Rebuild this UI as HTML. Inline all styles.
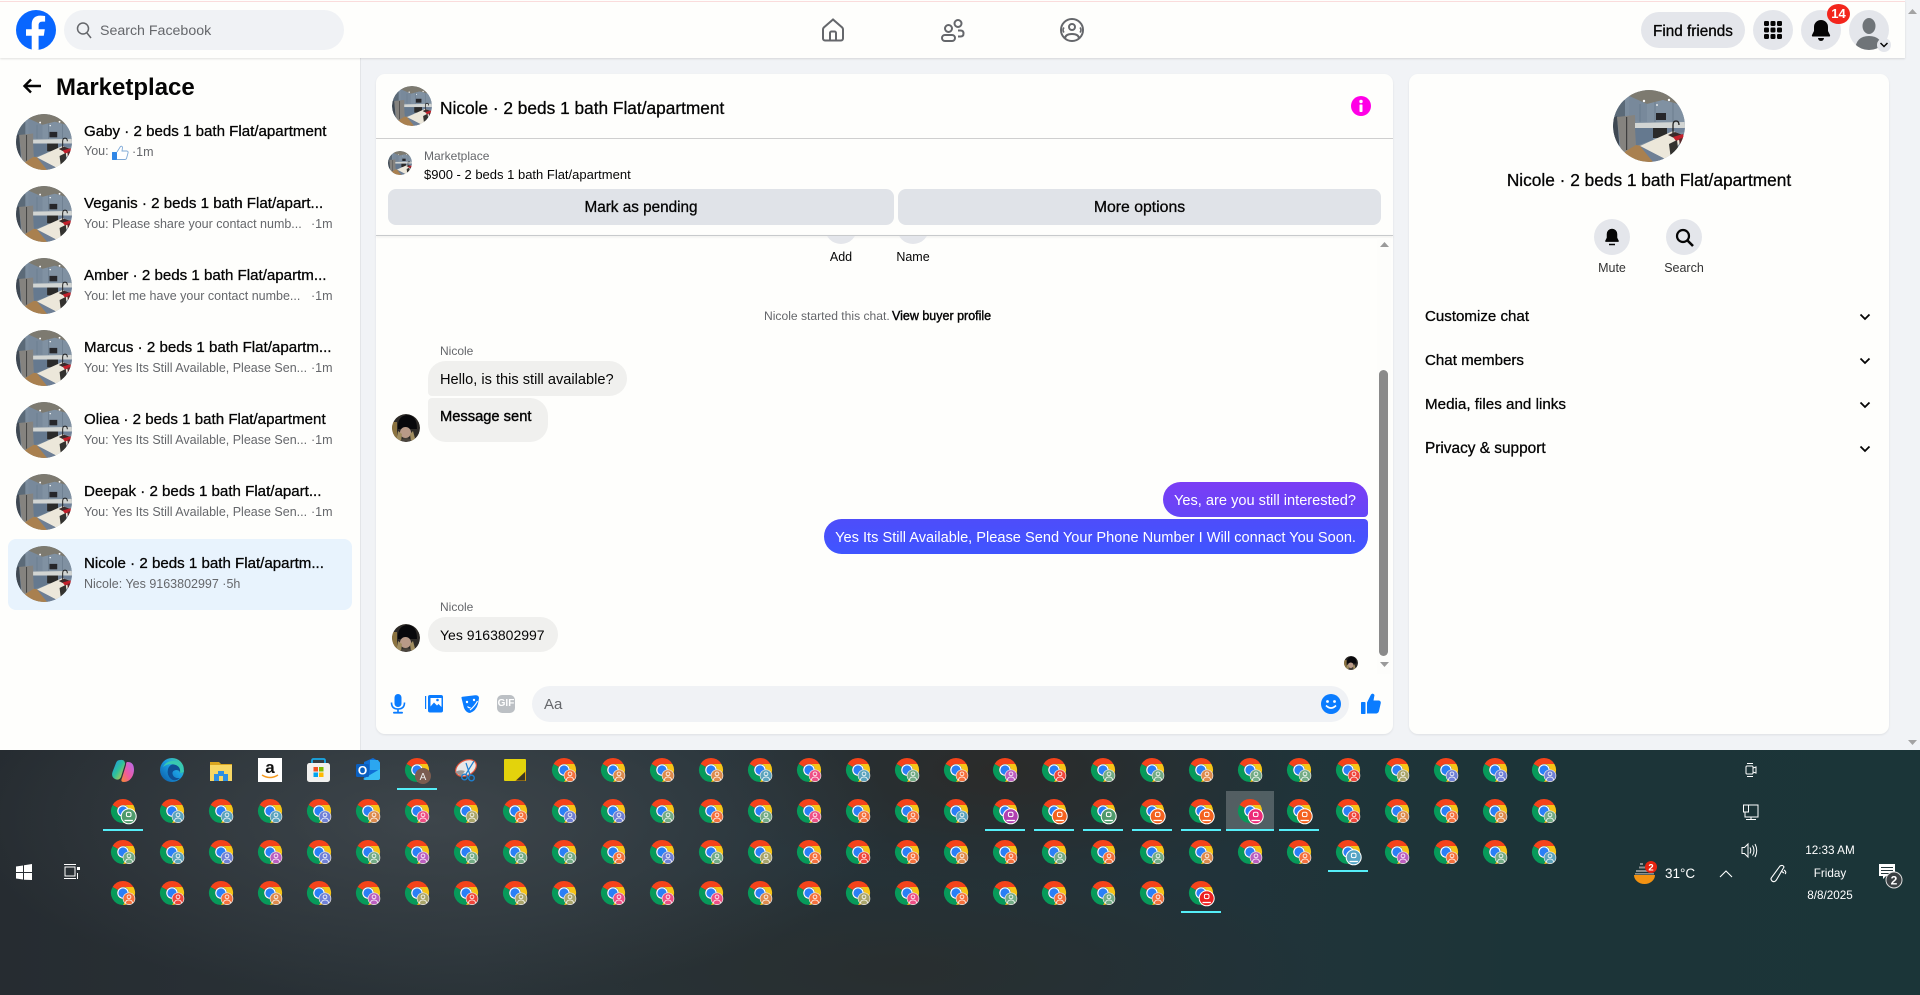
<!DOCTYPE html>
<html lang="en"><head><meta charset="utf-8"><title>Marketplace</title>
<style>
html,body{margin:0;padding:0;width:1920px;height:995px;overflow:hidden;background:#f1f3f6;font-family:"Liberation Sans",sans-serif;color:#050505}
.abs,.t,.a,.i{position:absolute}
.t{white-space:nowrap;line-height:20px;height:20px}
.s{-webkit-text-stroke:.3px currentColor}
.g{color:#65676b}
.a{border-radius:50%;display:block}
.i{display:block;overflow:visible}
.ti{font-size:15.1px;left:84px}
.su{font-size:12.5px;left:84px;color:#65676b}
.c{text-align:center}
.btn{position:absolute;background:#e0e3e8;border-radius:8px;top:189px;height:36px;line-height:38px;text-align:center;white-space:nowrap}
.rb{position:absolute;background:#e4e6eb;border-radius:50%}
.ch{position:absolute;left:1859px;width:12px;height:12px}
</style></head><body>
<svg width="0" height="0" style="position:absolute"><defs>
<clipPath id="kc"><circle cx="36" cy="36" r="36"/></clipPath>
<symbol id="k" viewBox="0 0 72 72"><g clip-path="url(#kc)">
<rect width="72" height="72" fill="#7c8d9e"/>
<polygon points="0,0 72,0 72,16 50,10 34,14 16,6 0,14" fill="#7d7a70"/>
<polygon points="16,6 34,14 34,32 20,30 16,26" fill="#78899b"/>
<polygon points="34,14 50,10 72,16 72,34 34,32" fill="#8091a2"/>
<path d="M27 14v18M42 12v20M60 13v20" stroke="#66788a" stroke-width=".8"/>
<rect x="43" y="23" width="10" height="7" fill="#26262a"/>
<polygon points="0,14 12,10 12,28 0,30" fill="#5b6a78"/>
<polygon points="0,28 4,26 7,64 0,60" fill="#3f4852"/>
<polygon points="4,27 22,25 23,58 8,62" fill="#85837f"/>
<rect x="13" y="27" width="1.2" height="33" fill="#3e3e3e"/>
<polygon points="22,33 72,32 72,38 22,38" fill="#d2d5d3"/>
<polygon points="22,38 40,38 40,50 23,56" fill="#65798f"/>
<rect x="40" y="38" width="14" height="10" fill="#2a2a2a"/>
<polygon points="54,38 72,38 72,42 54,44" fill="#6f8198"/>
<polygon points="8,64 23,55 29,56 42,72 14,72" fill="#a9804f"/>
<polygon points="27,56 60,41 72,46 54,70" fill="#ece7da"/>
<polygon points="27,56 54,70 50,72 40,72" fill="#6e7f95"/>
<path d="M60 44V35q0-4 3-4t3 4" fill="none" stroke="#222" stroke-width="1.300"/>
<polygon points="55,45 62,42 70,45 63,49" fill="#3a2a2a"/>
<polygon points="60,47 70,44 71,48 63,51" fill="#c2202b"/>
<polygon points="56,54 64,50 66,66 58,70" fill="#33322f"/>
<polygon points="66,49 72,47 72,60 68,64" fill="#5b2a2c"/>
<g fill="#fff"><circle cx="31" cy="11" r="1.200"/><circle cx="56" cy="10" r="1.200"/><circle cx="44" cy="15" r=".9"/></g>
</g></symbol>
<clipPath id="nc"><circle cx="14" cy="14" r="14"/></clipPath>
<symbol id="n" viewBox="0 0 28 28"><g clip-path="url(#nc)">
<rect width="28" height="28" fill="#2d2a27"/>
<rect x="0" y="8" width="5" height="20" fill="#8a7240"/>
<path d="M6 15Q5 2 15 1q10 0 10 14z" fill="#08080b"/>
<ellipse cx="13.500" cy="18.500" rx="5.500" ry="5.500" fill="#b99a88"/>
<path d="M6 17l-2 11h5l1-8zM21 17l3 11h-5l-1-8z" fill="#a08d60"/>
<path d="M8 28q1-4 6-4t6 4z" fill="#4a443c"/>
</g></symbol>
<linearGradient id="cp1" x1="0" y1="0" x2="1" y2="1"><stop offset="0" stop-color="#1e8ff0"/><stop offset=".5" stop-color="#2fc39a"/><stop offset="1" stop-color="#f4c430"/></linearGradient>
<linearGradient id="cp2" x1="1" y1="0" x2="0" y2="1"><stop offset="0" stop-color="#b06cf0"/><stop offset=".55" stop-color="#f05aa0"/><stop offset="1" stop-color="#f58a2e"/></linearGradient>
<linearGradient id="ed" x1="0" y1="1" x2="1" y2="0"><stop offset="0" stop-color="#0c59a4"/><stop offset=".55" stop-color="#1b9de2"/><stop offset="1" stop-color="#4fdc93"/></linearGradient>
<g id="c">
<path d="M12 0A12 12 0 0 1 22.400 6H12A6 6 0 0 0 6.800 9L1.600 6A12 12 0 0 1 12 0Z" fill="#f5431a"/>
<path d="M22.400 6A12 12 0 0 1 12 24L17.200 15A6 6 0 0 0 12 6Z" fill="#f7c417"/>
<path d="M1.600 6A12 12 0 0 0 12 24L17.200 15A6 6 0 0 1 6.800 9Z" fill="#079a5a"/>
<circle cx="12" cy="12" r="5.800" fill="#fff"/><circle cx="12" cy="12" r="4.600" fill="#2a7ff6"/>
</g>
<g id="b"><circle cx="18" cy="17.700" r="5.900" stroke="#efe9e4" stroke-width=".7"/><circle cx="18" cy="15.900" r="1.900" fill="none" stroke="#fff" stroke-width=".8"/><path d="M14.500 22q.2-3 3.500-3t3.500 3" fill="none" stroke="#fff" stroke-width=".8"/></g>
<g id="B"><circle cx="17.700" cy="17.300" r="7.500" stroke="#fff" stroke-width="1"/><rect x="15.400" y="13.300" width="4.600" height="4.300" rx="1.500" fill="none" stroke="#fff" stroke-width="1"/><path d="M13.500 21.500h8.400" stroke="#fff" stroke-width="1.300"/></g>
<g id="R"><use href="#c"/><use href="#b" fill="#f0453a"/></g>
<g id="O"><use href="#c"/><use href="#b" fill="#f4703c"/></g>
<g id="A"><use href="#c"/><use href="#b" fill="#dd8a4c"/></g>
<g id="G"><use href="#c"/><use href="#b" fill="#72ab85"/></g>
<g id="T"><use href="#c"/><use href="#b" fill="#5ba3bd"/></g>
<g id="U"><use href="#c"/><use href="#b" fill="#6f80d6"/></g>
<g id="P"><use href="#c"/><use href="#b" fill="#bb5fc0"/></g>
<g id="K"><use href="#c"/><use href="#b" fill="#ee4f85"/></g>
<g id="L"><use href="#c"/><use href="#b" fill="#a9a56b"/></g>
<g id="xG"><use href="#c"/><use href="#B" fill="#4f9a6c"/></g>
<g id="xP"><use href="#c"/><use href="#B" fill="#b040b0"/></g>
<g id="xO"><use href="#c"/><use href="#B" fill="#f4621f"/></g>
<g id="xK"><use href="#c"/><use href="#B" fill="#ec2a78"/></g>
<g id="xT"><use href="#c"/><use href="#B" fill="#55a5c5"/></g>
<g id="xR"><use href="#c"/><use href="#B" fill="#ee2020"/></g>
</defs></svg>

<!-- header -->
<div class="abs" style="left:0;top:0;width:1905px;height:58px;background:#fefefc;box-shadow:0 1px 2px rgba(0,0,0,.12);z-index:3">
<div class="abs" style="left:0;top:1px;width:100%;height:1px;background:#fadcdc"></div>
<svg class="i" style="left:16px;top:10px" width="40" height="40" viewBox="0 0 40 40"><circle cx="20" cy="20" r="20" fill="#0866ff"/><path d="M27.800 25.800l1-6.500h-6.200v-4.200c0-1.800.9-3.500 3.700-3.500h2.800V6s-2.600-.4-5-.4c-5.100 0-8.400 3.100-8.400 8.700v5H10v6.500h5.700v14c1.400.2 2.300.3 3.400.3s2.300-.1 3.500-.3v-14z" fill="#fff"/></svg>
<div class="abs" style="left:64px;top:10px;width:280px;height:40px;border-radius:20px;background:#f0f2f5"></div>
<svg class="i" style="left:76px;top:21px" width="16" height="18" viewBox="0 0 16 18"><circle cx="7" cy="7.500" r="5.500" fill="none" stroke="#65676b" stroke-width="1.500"/><path d="M11 12l4 5" stroke="#65676b" stroke-width="1.500"/></svg>
<div class="t g" style="left:100px;top:21px;font-size:14.200px">Search Facebook</div>
<svg class="i" style="left:821px;top:18px" width="24" height="24" viewBox="0 0 24 24" fill="none" stroke="#65676b" stroke-width="2"><path d="M12 1.500L2.800 9.500Q2 10.300 2 11.500V20.500A2 2 0 0 0 4 22.500H20A2 2 0 0 0 22 20.500V11.500Q22 10.300 21.200 9.500Z"/><path d="M9 22V15A1.500 1.500 0 0 1 10.500 13.500H13.500A1.500 1.500 0 0 1 15 15V22"/></svg>
<svg class="i" style="left:941px;top:18px" width="24" height="24" viewBox="0 0 24 24" fill="none" stroke="#65676b" stroke-width="2"><circle cx="7.500" cy="10.500" r="3.500"/><circle cx="17" cy="5.500" r="3.500"/><rect x="1" y="17" width="13" height="6" rx="3"/><path d="M17 12.500h2.500q3 0 3 3t-3 3H17"/></svg>
<svg class="i" style="left:1060px;top:18px" width="24" height="24" viewBox="0 0 24 24" fill="none" stroke="#65676b" stroke-width="2"><circle cx="12" cy="12" r="11"/><circle cx="12" cy="9" r="3"/><path d="M5 21q0-5 7-5t7 5"/><path d="M4 9.500q-2 2.500 0 5M20 9.500q2 2.500 0 5" stroke-width="1.600"/></svg>

<div class="abs c s" style="left:1641px;top:12px;width:104px;height:36px;line-height:39px;border-radius:18px;background:#e4e6eb;font-size:15.300px">Find friends</div>
<div class="rb" style="left:1753px;top:10px;width:40px;height:40px"></div>
<svg class="i" style="left:1764px;top:21px" width="18" height="18" viewBox="0 0 18 18" fill="#050505"><rect x="0" y="0" width="5" height="5" rx="1.200"/><rect x="6.500" y="0" width="5" height="5" rx="1.200"/><rect x="13" y="0" width="5" height="5" rx="1.200"/><rect x="0" y="6.500" width="5" height="5" rx="1.200"/><rect x="6.500" y="6.500" width="5" height="5" rx="1.200"/><rect x="13" y="6.500" width="5" height="5" rx="1.200"/><rect x="0" y="13" width="5" height="5" rx="1.200"/><rect x="6.500" y="13" width="5" height="5" rx="1.200"/><rect x="13" y="13" width="5" height="5" rx="1.200"/></svg>
<div class="rb" style="left:1801px;top:10px;width:40px;height:40px"></div>
<svg class="i" style="left:1809px;top:18px" width="24" height="24" viewBox="0 0 24 24" fill="#050505"><path d="M12 2a7 7 0 0 0-7 7v4l-2 4a1 1 0 0 0 1 1.500h16a1 1 0 0 0 1-1.500l-2-4V9a7 7 0 0 0-7-7z"/><path d="M9 20a3 3 0 0 0 6 0z"/></svg>
<div class="abs c" style="left:1827px;top:4px;width:23px;height:20px;line-height:20px;border-radius:50%;background:#f3251c;color:#fff;font-size:13px;font-weight:bold">14</div>
<div class="rb" style="left:1849px;top:10px;width:40px;height:40px;background:#e4e6eb;overflow:hidden"><svg width="40" height="40" viewBox="0 0 40 40" fill="#6f7478" style="display:block"><ellipse cx="20" cy="16" rx="6.500" ry="8"/><path d="M6 40q1-14 14-14t14 14z"/></svg></div>
<div class="abs" style="left:1877px;top:38px;width:14px;height:14px;border-radius:50%;background:#e4e6eb"></div>
<svg class="i" style="left:1879px;top:41px" width="10" height="8" viewBox="0 0 10 8"><path d="M1.500 2L5 5.500 8.500 2" fill="none" stroke="#050505" stroke-width="1.500"/></svg>
</div>

<!-- page scrollbar -->
<div class="abs" style="left:1905px;top:0;width:15px;height:750px;background:#f1f3f6"></div>
<svg class="i" style="left:1908px;top:9px" width="9" height="5"><polygon points="4.500,0 9,5 0,5" fill="#a3a3a3"/></svg>
<svg class="i" style="left:1908px;top:740px" width="9" height="5"><polygon points="0,0 9,0 4.500,5" fill="#a3a3a3"/></svg>

<!-- left panel -->
<div class="abs" style="left:0;top:58px;width:360px;height:692px;background:#fefefc;border-right:1px solid #e3e5e8"></div>
<svg class="i" style="left:22px;top:78px" width="20" height="16" viewBox="0 0 20 16"><path d="M19 8H3M9 1.500L2.500 8 9 14.500" fill="none" stroke="#050505" stroke-width="2.400"/></svg>
<div class="t" style="left:56px;top:78px;font-size:24px;font-weight:bold">Marketplace</div>

<div class="abs" style="left:8px;top:539px;width:344px;height:71px;border-radius:8px;background:#e8f3fd"></div>

<svg class="a" style="left:16px;top:114px" width="56" height="56"><use href="#k"/></svg>
<div class="t ti s" style="top:122px">Gaby · 2 beds 1 bath Flat/apartment</div>
<div class="t su" style="top:141px">You:</div>
<svg class="i" style="left:112px;top:145px" width="17" height="15" viewBox="0 0 17 15"><rect x="0" y="7" width="5" height="8" rx=".5" fill="#2f86e6"/><path d="M5 7L8.500 1.500Q10 .5 10.500 2.500L10 6H15Q16.500 6.500 16 8L14.500 13.500Q14 14.500 13 14.500H5" fill="#fff" stroke="#7fa9d6" stroke-width=".9"/></svg>
<div class="t su" style="left:132px;top:142px">·1m</div>

<svg class="a" style="left:16px;top:186px" width="56" height="56"><use href="#k"/></svg>
<div class="t ti s" style="top:194px">Veganis · 2 beds 1 bath Flat/apart...</div>
<div class="t su" style="top:214px">You: Please share your contact numb...</div><div class="t su" style="left:311px;top:214px">·1m</div>

<svg class="a" style="left:16px;top:258px" width="56" height="56"><use href="#k"/></svg>
<div class="t ti s" style="top:266px">Amber · 2 beds 1 bath Flat/apartm...</div>
<div class="t su" style="top:286px">You: let me have your contact numbe...</div><div class="t su" style="left:311px;top:286px">·1m</div>

<svg class="a" style="left:16px;top:330px" width="56" height="56"><use href="#k"/></svg>
<div class="t ti s" style="top:338px">Marcus · 2 beds 1 bath Flat/apartm...</div>
<div class="t su" style="top:358px">You: Yes Its Still Available, Please Sen...</div><div class="t su" style="left:311px;top:358px">·1m</div>

<svg class="a" style="left:16px;top:402px" width="56" height="56"><use href="#k"/></svg>
<div class="t ti s" style="top:410px">Oliea · 2 beds 1 bath Flat/apartment</div>
<div class="t su" style="top:430px">You: Yes Its Still Available, Please Sen...</div><div class="t su" style="left:311px;top:430px">·1m</div>

<svg class="a" style="left:16px;top:474px" width="56" height="56"><use href="#k"/></svg>
<div class="t ti s" style="top:482px">Deepak · 2 beds 1 bath Flat/apart...</div>
<div class="t su" style="top:502px">You: Yes Its Still Available, Please Sen...</div><div class="t su" style="left:311px;top:502px">·1m</div>

<svg class="a" style="left:16px;top:546px" width="56" height="56"><use href="#k"/></svg>
<div class="t ti s" style="top:554px">Nicole · 2 beds 1 bath Flat/apartm...</div>
<div class="t su" style="top:574px">Nicole: Yes 9163802997 ·5h</div>

<!-- chat card -->
<div class="abs" style="left:376px;top:74px;width:1017px;height:660px;border-radius:9px;background:#fefefc;box-shadow:0 1px 2px rgba(0,0,0,.08)"></div>
<svg class="a" style="left:392px;top:86px" width="40" height="40"><use href="#k"/></svg>
<div class="t s" style="left:440px;top:98px;font-size:17.300px">Nicole · 2 beds 1 bath Flat/apartment</div>
<svg class="i" style="left:1351px;top:96px" width="20" height="20" viewBox="0 0 20 20"><circle cx="10" cy="10" r="10" fill="#ff00e6"/><circle cx="10" cy="5.500" r="1.700" fill="#fff"/><rect x="8.500" y="8.500" width="3" height="7.500" rx=".7" fill="#fff"/></svg>
<div class="abs" style="left:376px;top:138px;width:1017px;height:1px;background:#cfcfcf"></div>
<svg class="a" style="left:388px;top:151px" width="24" height="24"><use href="#k"/></svg>
<div class="t g" style="left:424px;top:146px;font-size:12px">Marketplace</div>
<div class="t" style="left:424px;top:165px;font-size:13px">$900 - 2 beds 1 bath Flat/apartment</div>
<div class="btn s" style="left:388px;width:506px;font-size:15.300px">Mark as pending</div>
<div class="btn s" style="left:898px;width:483px;font-size:15.800px">More options</div>
<div class="abs" style="left:376px;top:235px;width:1017px;height:1px;background:#c8cacc;box-shadow:0 1px 2px rgba(0,0,0,.12)"></div>

<div class="abs" style="left:825px;top:236px;width:32px;height:8px;overflow:hidden"><div class="abs" style="left:0;top:-24px;width:32px;height:32px;border-radius:50%;background:#e4e6eb"></div></div>
<div class="abs" style="left:897px;top:236px;width:32px;height:8px;overflow:hidden"><div class="abs" style="left:0;top:-24px;width:32px;height:32px;border-radius:50%;background:#e4e6eb"></div></div>
<div class="t c" style="left:811px;top:247px;width:60px;font-size:12.500px">Add</div>
<div class="t c" style="left:883px;top:247px;width:60px;font-size:12.500px">Name</div>
<div class="t g" style="left:764px;top:306px;font-size:12.100px">Nicole started this chat.</div>
<div class="t s" style="left:892px;top:306px;font-size:12.500px;-webkit-text-stroke:.4px #050505">View buyer profile</div>

<div class="abs" style="left:1377px;top:238px;width:14px;height:436px;background:#fdfdfb"></div>
<svg class="i" style="left:1380px;top:242px" width="9" height="5"><polygon points="4.500,0 9,5 0,5" fill="#9a9a9a"/></svg>
<div class="abs" style="left:1379px;top:370px;width:9px;height:286px;border-radius:5px;background:#8a8a8a"></div>
<svg class="i" style="left:1380px;top:662px" width="9" height="5"><polygon points="0,0 9,0 4.500,5" fill="#9a9a9a"/></svg>

<div class="t g" style="left:440px;top:341px;font-size:12px">Nicole</div>
<div class="abs" style="left:428px;top:361px;width:199px;height:35px;background:#f0f0ee;border-radius:18px 18px 18px 4px"></div>
<div class="t" style="left:440px;top:370px;font-size:14.600px">Hello, is this still available?</div>
<div class="abs" style="left:428px;top:398px;width:120px;height:44px;background:#f0f0ee;border-radius:4px 18px 18px 18px"></div>
<div class="t s" style="left:440px;top:407px;font-size:14.700px;-webkit-text-stroke:.4px #050505">Message sent</div>
<svg class="a" style="left:392px;top:414px" width="28" height="28"><use href="#n"/></svg>

<div class="abs" style="left:1163px;top:482px;width:205px;height:35px;background:linear-gradient(#7b3df5,#6446f7);border-radius:18px 18px 4px 18px"></div>
<div class="t" style="right:564px;top:491px;font-size:14.600px;color:#fff">Yes, are you still interested?</div>
<div class="abs" style="left:824px;top:519px;width:544px;height:35px;background:linear-gradient(#4e4dfa,#3f55ff);border-radius:18px 4px 18px 18px"></div>
<div class="t" style="right:564px;top:528px;font-size:14.600px;color:#fff">Yes Its Still Available, Please Send Your Phone Number I Will connact You Soon.</div>

<div class="t g" style="left:440px;top:597px;font-size:12px">Nicole</div>
<div class="abs" style="left:428px;top:617px;width:130px;height:35px;background:#f0f0ee;border-radius:18px"></div>
<div class="t" style="left:440px;top:625px;font-size:14px">Yes 9163802997</div>
<svg class="a" style="left:392px;top:624px" width="28" height="28"><use href="#n"/></svg>
<svg class="a" style="left:1344px;top:656px" width="14" height="14"><use href="#n"/></svg>

<svg class="i" style="left:390px;top:694px" width="16" height="20" viewBox="0 0 16 20" fill="#0a7cff"><rect x="4.500" y="0" width="7" height="13" rx="3.500"/><path d="M1.500 8.500q0 6.500 6.500 6.500t6.500-6.500" fill="none" stroke="#0a7cff" stroke-width="1.600"/><rect x="7.200" y="15" width="1.600" height="3"/><rect x="3" y="17.800" width="10" height="1.800" rx=".9"/></svg>
<svg class="i" style="left:425px;top:695px" width="18" height="18" viewBox="0 0 18 18"><rect x="3" y="0" width="15" height="17.500" rx="2" fill="#0a7cff"/><rect x="0" y="1" width="1.200" height="13" fill="#0a7cff"/><path d="M5.500 11.500l3.500-4 3 3 1.500-1.500 3 3v-9H5.500z" fill="#fff"/><circle cx="12.500" cy="5" r="1.300" fill="#0a7cff"/></svg>
<svg class="i" style="left:461px;top:695px" width="18" height="18" viewBox="0 0 18 18"><path d="M.5 3Q.2 2 1.500 1.800L14 .2Q18 0 18 3L17 9Q15 16 9 18Q5 17.800 3 13Z" fill="#0a7cff"/><circle cx="6" cy="7" r="1.200" fill="#fff"/><circle cx="13" cy="5" r="1.200" fill="#fff"/><path d="M9 15q5-4 7.500-9" stroke="#fff" stroke-width="1.200" fill="none"/><path d="M6.500 11.500q1.500 1.800 3 1" stroke="#fff" stroke-width="1.200" fill="none"/></svg>
<div class="abs c" style="left:497px;top:695px;width:18px;height:18px;border-radius:5px;background:#bcc0c4;color:#fff;font-size:10px;font-weight:bold;line-height:18px">GIF</div>
<div class="abs" style="left:532px;top:686px;width:817px;height:36px;border-radius:18px;background:#f0f2f5"></div>
<div class="t g" style="left:544px;top:695px;font-size:15px">Aa</div>
<svg class="i" style="left:1321px;top:694px" width="20" height="20" viewBox="0 0 20 20"><circle cx="10" cy="10" r="10" fill="#0a7cff"/><circle cx="6.500" cy="7.500" r="1.400" fill="#fff"/><circle cx="13.500" cy="7.500" r="1.400" fill="#fff"/><path d="M5 11.500q5 5 10 0" fill="none" stroke="#fff" stroke-width="1.600"/></svg>
<svg class="i" style="left:1361px;top:693px" width="20" height="21" viewBox="0 0 20 21" fill="#0a7cff"><rect x="0" y="9" width="4.500" height="12" rx=".8"/><path d="M6 9.500L10 1.500Q12 -.5 13.500 2L12.500 7.500H18Q20 8 19.800 10L18 18Q17.500 20 15.500 20.500H6Z"/></svg>

<!-- right card -->
<div class="abs" style="left:1409px;top:74px;width:480px;height:660px;border-radius:9px;background:#fefefc;box-shadow:0 1px 2px rgba(0,0,0,.08)"></div>
<svg class="a" style="left:1613px;top:90px" width="72" height="72"><use href="#k"/></svg>
<div class="t c s" style="left:1409px;top:170px;width:480px;font-size:17.300px">Nicole · 2 beds 1 bath Flat/apartment</div>
<div class="rb" style="left:1594px;top:219px;width:36px;height:36px"></div>
<svg class="i" style="left:1603px;top:228px" width="18" height="18" viewBox="0 0 24 24" fill="#050505"><path d="M12 1a7 7 0 0 0-7 7v5l-2 4a1 1 0 0 0 1 1.500h16a1 1 0 0 0 1-1.500l-2-4V8a7 7 0 0 0-7-7z"/><path d="M8 21h8v2H8z"/></svg>
<div class="rb" style="left:1666px;top:219px;width:36px;height:36px"></div>
<svg class="i" style="left:1675px;top:228px" width="19" height="19" viewBox="0 0 19 19"><circle cx="8" cy="8" r="6" fill="none" stroke="#050505" stroke-width="2.200"/><path d="M12.500 12.500L18 18" stroke="#050505" stroke-width="2.600"/></svg>
<div class="t c" style="left:1582px;top:258px;width:60px;font-size:12.500px;color:#333">Mute</div>
<div class="t c" style="left:1654px;top:258px;width:60px;font-size:12.500px;color:#333">Search</div>
<div class="t s" style="left:1425px;top:307px;font-size:15.100px">Customize chat</div>
<div class="t s" style="left:1425px;top:351px;font-size:15.100px">Chat members</div>
<div class="t s" style="left:1425px;top:395px;font-size:15.200px">Media, files and links</div>
<div class="t s" style="left:1425px;top:439px;font-size:15.400px">Privacy &amp; support</div>
<svg class="ch" style="top:311px" viewBox="0 0 12 12"><path d="M1.500 3.500L6 8l4.500-4.500" fill="none" stroke="#050505" stroke-width="1.800"/></svg>
<svg class="ch" style="top:355px" viewBox="0 0 12 12"><path d="M1.500 3.500L6 8l4.500-4.500" fill="none" stroke="#050505" stroke-width="1.800"/></svg>
<svg class="ch" style="top:399px" viewBox="0 0 12 12"><path d="M1.500 3.500L6 8l4.500-4.500" fill="none" stroke="#050505" stroke-width="1.800"/></svg>
<svg class="ch" style="top:443px" viewBox="0 0 12 12"><path d="M1.500 3.500L6 8l4.500-4.500" fill="none" stroke="#050505" stroke-width="1.800"/></svg>

<!-- taskbar -->
<div class="abs" style="left:0;top:750px;width:1920px;height:245px;background:radial-gradient(ellipse 460px 180px at 430px 70px,rgba(66,74,80,.8),rgba(66,74,80,0)),radial-gradient(ellipse 300px 120px at 1000px 20px,rgba(44,42,40,.9),rgba(44,42,40,0)),radial-gradient(ellipse 420px 120px at 900px 220px,rgba(44,42,38,.55),rgba(44,42,38,0)),linear-gradient(90deg,#262c31 0%,#2a3338 25%,#24333a 45%,#22333a 60%,#1c3438 80%,#1b3538 100%)"></div>
<svg class="abs" style="left:0;top:750px" width="1920" height="245" viewBox="0 750 1920 245" font-family="'Liberation Sans',sans-serif">
<rect x="1226" y="791" width="48" height="39" fill="#fff" opacity=".22"/>
<g fill="#55eef8">
<rect x="397" y="788" width="40" height="2"/>
<rect x="103" y="829" width="40" height="2"/>
<rect x="985" y="829" width="40" height="2"/><rect x="1034" y="829" width="40" height="2"/><rect x="1083" y="829" width="40" height="2"/><rect x="1132" y="829" width="40" height="2"/><rect x="1181" y="829" width="40" height="2"/><rect x="1226" y="829" width="48" height="2"/><rect x="1279" y="829" width="40" height="2"/>
<rect x="1328" y="870" width="40" height="2"/>
<rect x="1181" y="911" width="40" height="2"/>
</g>
<!-- row 1 apps -->
<g transform="translate(112 759)"><path d="M8 1Q13 0 13 5L9 18Q7 22 3 20Q-1 18 .5 13L4 4Q5 1 8 1Z" fill="url(#cp1)"/><path d="M15 3Q20 2.500 21.500 7Q23 13 20 18Q17 23 12 23Q8 23 10 19L14 6Q14 3.500 15 3Z" fill="url(#cp2)"/></g>
<g transform="translate(160 758)"><circle cx="12" cy="12" r="12" fill="url(#ed)"/><path d="M24 13Q24 7 17 6Q10 5 8 11Q6.500 17 11 21Q15 24 20 20Q14 21 12.500 16Q12 12.500 16 12Q20 12 20 15Q24 15 24 13Z" fill="#0f4f94"/><path d="M24 13Q23 3 13 3Q6 3 3 9Q8 5 14 6.500Q21 8 20 15Q24 15 24 13Z" fill="#38c9b0"/></g>
<g transform="translate(210 761)"><path d="M0 1H9L11 3H22V19H0Z" fill="#d9a520"/><rect x="0" y="4" width="22" height="16" fill="#f7d765"/><path d="M4 20V13H8V10H14V13H18V20H13V15H9V20Z" fill="#2d8fe3"/></g>
<rect x="258" y="758" width="24" height="24" fill="#fff"/>
<text x="270" y="773" text-anchor="middle" font-size="17" font-weight="bold" fill="#111">a</text>
<path d="M262 775q8 5 16 0" fill="none" stroke="#f59a1f" stroke-width="1.500"/>
<g transform="translate(307 758)"><path d="M5 6V2.500Q5 1 6.500 1H16.500Q18 1 18 2.500V6" fill="none" stroke="#18a9e8" stroke-width="1.800"/><rect x="0" y="5" width="23" height="19" rx="2.500" fill="#f1f0ee"/><rect x="6.500" y="9" width="4.500" height="4.500" fill="#f25022"/><rect x="12" y="9" width="4.500" height="4.500" fill="#7fba00"/><rect x="6.500" y="14.500" width="4.500" height="4.500" fill="#00a4ef"/><rect x="12" y="14.500" width="4.500" height="4.500" fill="#ffb900"/></g>
<g transform="translate(356 758)"><path d="M8 4L17 0L24 4V20Q24 22 22 22H8Z" fill="#0f6fd6"/><path d="M14 2h8l2 3v7h-10z" fill="#2ba6f0"/><path d="M7 21L24 11V20Q24 22 22 22H9Z" fill="#39bdf4"/><rect x="0" y="6" width="13" height="13" rx="1.500" fill="#0a5fc0"/><text x="6.500" y="16.500" text-anchor="middle" font-size="12" font-weight="bold" fill="#fff">O</text></g>
<use href="#c" x="405" y="758"/>
<circle cx="423" cy="776" r="8" fill="#7b5c50"/><text x="423" y="780" text-anchor="middle" font-size="10" fill="#eee">A</text>
<g transform="translate(455 759)"><ellipse cx="11" cy="9" rx="11" ry="7.500" transform="rotate(-28 11 9)" fill="#e8e8e8" stroke="#e3533a" stroke-width="1.200"/><path d="M0 13Q5 10 10 12L6 17Z" fill="#999"/><path d="M11 4l4 12M19 2l-8 13" stroke="#1d7fd0" stroke-width="1.200"/><circle cx="16.500" cy="19" r="2.800" fill="none" stroke="#1d7fd0" stroke-width="1.400"/><circle cx="9.500" cy="18" r="2.800" fill="none" stroke="#1d7fd0" stroke-width="1.400"/></g>
<g transform="translate(504 759)"><rect width="22" height="22" rx="1" fill="#e3d30c"/><path d="M22 12V21Q22 22 21 22H11Z" fill="#d89c08"/><path d="M21 13L12 21.500H21Z" fill="#3a3525"/></g>

<!-- row 1 -->
<use href="#O" x="552" y="758"/><use href="#A" x="601" y="758"/><use href="#A" x="650" y="758"/><use href="#A" x="699" y="758"/><use href="#T" x="748" y="758"/><use href="#K" x="797" y="758"/><use href="#T" x="846" y="758"/><use href="#G" x="895" y="758"/><use href="#O" x="944" y="758"/><use href="#P" x="993" y="758"/><use href="#R" x="1042" y="758"/><use href="#G" x="1091" y="758"/><use href="#G" x="1140" y="758"/><use href="#A" x="1189" y="758"/><use href="#G" x="1238" y="758"/><use href="#G" x="1287" y="758"/><use href="#R" x="1336" y="758"/><use href="#L" x="1385" y="758"/><use href="#U" x="1434" y="758"/><use href="#U" x="1483" y="758"/><use href="#U" x="1532" y="758"/>
<!-- row 2 -->
<use href="#xG" x="111" y="799"/><use href="#T" x="160" y="799"/><use href="#T" x="209" y="799"/><use href="#T" x="258" y="799"/><use href="#U" x="307" y="799"/><use href="#A" x="356" y="799"/><use href="#K" x="405" y="799"/><use href="#L" x="454" y="799"/><use href="#O" x="503" y="799"/><use href="#U" x="552" y="799"/><use href="#U" x="601" y="799"/><use href="#G" x="650" y="799"/><use href="#O" x="699" y="799"/><use href="#G" x="748" y="799"/><use href="#K" x="797" y="799"/><use href="#O" x="846" y="799"/><use href="#O" x="895" y="799"/><use href="#T" x="944" y="799"/><use href="#xP" x="993" y="799"/><use href="#xO" x="1042" y="799"/><use href="#xG" x="1091" y="799"/><use href="#xO" x="1140" y="799"/><use href="#xO" x="1189" y="799"/><use href="#xK" x="1238" y="799"/><use href="#xO" x="1287" y="799"/><use href="#R" x="1336" y="799"/><use href="#A" x="1385" y="799"/><use href="#O" x="1434" y="799"/><use href="#A" x="1483" y="799"/><use href="#G" x="1532" y="799"/>
<!-- row 3 -->
<use href="#G" x="111" y="840"/><use href="#T" x="160" y="840"/><use href="#U" x="209" y="840"/><use href="#P" x="258" y="840"/><use href="#U" x="307" y="840"/><use href="#G" x="356" y="840"/><use href="#P" x="405" y="840"/><use href="#G" x="454" y="840"/><use href="#G" x="503" y="840"/><use href="#G" x="552" y="840"/><use href="#O" x="601" y="840"/><use href="#U" x="650" y="840"/><use href="#G" x="699" y="840"/><use href="#L" x="748" y="840"/><use href="#O" x="797" y="840"/><use href="#R" x="846" y="840"/><use href="#O" x="895" y="840"/><use href="#A" x="944" y="840"/><use href="#O" x="993" y="840"/><use href="#G" x="1042" y="840"/><use href="#O" x="1091" y="840"/><use href="#G" x="1140" y="840"/><use href="#A" x="1189" y="840"/><use href="#P" x="1238" y="840"/><use href="#O" x="1287" y="840"/><use href="#xT" x="1336" y="840"/><use href="#P" x="1385" y="840"/><use href="#O" x="1434" y="840"/><use href="#G" x="1483" y="840"/><use href="#T" x="1532" y="840"/>
<!-- row 4 -->
<use href="#O" x="111" y="881"/><use href="#R" x="160" y="881"/><use href="#O" x="209" y="881"/><use href="#A" x="258" y="881"/><use href="#U" x="307" y="881"/><use href="#P" x="356" y="881"/><use href="#L" x="405" y="881"/><use href="#R" x="454" y="881"/><use href="#L" x="503" y="881"/><use href="#L" x="552" y="881"/><use href="#K" x="601" y="881"/><use href="#K" x="650" y="881"/><use href="#K" x="699" y="881"/><use href="#A" x="748" y="881"/><use href="#O" x="797" y="881"/><use href="#L" x="846" y="881"/><use href="#K" x="895" y="881"/><use href="#O" x="944" y="881"/><use href="#G" x="993" y="881"/><use href="#O" x="1042" y="881"/><use href="#G" x="1091" y="881"/><use href="#O" x="1140" y="881"/><use href="#xR" x="1189" y="881"/>

<!-- start / task view -->
<path d="M16 866.500L23 865.500V872H16ZM24 865.300L32 864V872H24ZM16 873H23V879.500L16 878.500ZM24 873H32V880L24 879.700Z" fill="#fff"/>
<g fill="none" stroke="#fff" stroke-width="1"><path d="M64 864.500H76M64 878.500H76"/><rect x="65" y="867" width="10" height="9"/></g><path d="M77 867h3v3h-3zM77 873h1v6h-1z" fill="#fff"/>

<!-- tray -->
<g fill="none" stroke="#fff" stroke-width="1"><path d="M1747 763.500h6M1747 776.500h6"/><rect x="1746" y="766" width="7" height="8" rx="1"/><path d="M1753 768l3-1v6l-3-1"/></g>
<g fill="none" stroke="#fff" stroke-width="1"><rect x="1745" y="805" width="13" height="12"/><rect x="1743.500" y="805" width="5" height="7" fill="#1f3538"/><path d="M1751 817v2M1746 819.500h10"/></g>
<g fill="none" stroke="#fff" stroke-width="1"><path d="M1742 847.500h2.500l3.500-3.500v13l-3.500-3.500H1742z"/><path d="M1750 847.500q1.500 3 0 6M1752.500 845.500q3 5 0 10M1755 844q3.500 6.500 0 13"/></g>
<path d="M1634 875h21a10.500 9 0 0 1-21 0z" fill="#f39212"/><g fill="#8a8f8f"><rect x="1640" y="863" width="3" height="2"/><rect x="1639" y="866.500" width="6" height="2"/><rect x="1636" y="870" width="17" height="2"/><rect x="1635" y="873" width="19" height="1.500"/></g>
<circle cx="1651" cy="867" r="6" fill="#e8230f"/><text x="1651" y="870.500" text-anchor="middle" font-size="9.500" font-weight="bold" fill="#fff">2</text>
<text x="1665" y="878" font-size="13.500" fill="#fff">31°C</text>
<path d="M1720 877l6-6 6 6" fill="none" stroke="#fff" stroke-width="1.100"/>
<path d="M1772 881q-2-2 0-4l8-11q3-1.500 4 1l-7 12q-2 4-5 2zM1781 871l3 2M1784 870q3 2 1 4" fill="none" stroke="#fff" stroke-width="1.100"/>
<text x="1830" y="854" text-anchor="middle" font-size="11.700" fill="#fff">12:33 AM</text>
<text x="1830" y="877" text-anchor="middle" font-size="11.700" fill="#fff">Friday</text>
<text x="1830" y="899" text-anchor="middle" font-size="11.700" fill="#fff">8/8/2025</text>
<path d="M1879 864h16v12h-9l-3 3v-3h-4z" fill="#fff"/><path d="M1881 867.500h12M1881 870.500h12M1881 873.500h8" stroke="#26383c" stroke-width="1"/>
<circle cx="1894" cy="880" r="8" fill="#3a3f42" stroke="#ddd" stroke-width="1"/><text x="1894" y="884.500" text-anchor="middle" font-size="12" font-weight="bold" fill="#fff">2</text>
</svg>
</body></html>
